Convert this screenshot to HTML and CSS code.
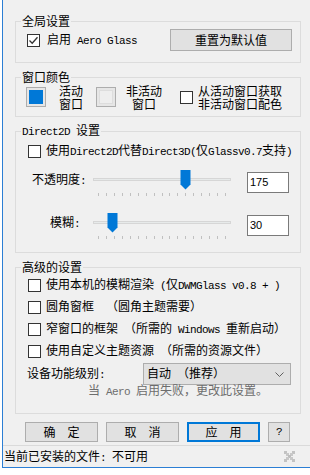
FILE: index.html
```html
<html>
<head>
<meta charset="utf-8">
<link rel="stylesheet" href="styles.css">
</head>
<body>
<div class="window">

<fieldset class="group g1">
<legend>全局设置</legend>
<div class="g1_body">
	<div class="cbrow">
		<span class="cb"><svg width="11" height="11" viewBox="0 0 11 11"><path d="M1.5 5.5 L4.2 8.2 L9.5 2.2" fill="none" stroke="#333" stroke-width="1.3"/></svg></span>
		<span class="cbtext">启用<span class="en"> Aero Glass</span></span>
	</div>
	<button class="btn reset">重置为默认值</button>
</div>
</fieldset>

<fieldset class="group g2">
<legend>窗口颜色</legend>
<div class="colors">
	<span class="swatch"><span class="swatch_fill active"></span></span>
	<span class="swatch_label w_active"><span class="line">活动</span><span class="line">窗口</span></span>
	<span class="swatch"><span class="swatch_fill inactive"></span></span>
	<span class="swatch_label w_inactive"><span class="line">非活动</span><span class="line">窗口</span></span>
	<span class="cb from_active"></span>
	<span class="two_line"><span class="line">从活动窗口获取</span><span class="line">非活动窗口配色</span></span>
</div>
</fieldset>

<fieldset class="group g3">
<legend><span class="en">Direct2D </span>设置</legend>
<div class="g3_body">
	<div class="cbrow">
		<span class="cb"></span>
		<span class="cbtext">使用<span class="en">Direct2D</span>代替<span class="en">Direct3D(</span>仅<span class="en">Glassv0.7</span>支持<span class="en">)</span></span>
	</div>

	<div class="slider_row first">
		<span class="s_label">不透明度<span class="en">:</span></span>
		<div class="track_area">
			<div class="track"></div>
			<div class="ticks"><i></i><i></i><i></i><i></i><i></i><i></i><i></i><i></i><i></i><i></i><i></i><i></i><i></i><i></i><i></i><i></i><i></i></div>
			<svg class="thumb" style="left:87px" width="11" height="20" viewBox="0 0 11 20"><path d="M0.5 0 H10.5 V14.5 L5.5 19.5 L0.5 14.5 Z" fill="#0078d7"/></svg>
		</div>
		<div class="edit">175</div>
	</div>

	<div class="slider_row second">
		<span class="s_label blur">模糊<span class="en">:</span></span>
		<div class="track_area">
			<div class="track"></div>
			<div class="ticks"><i></i><i></i><i></i><i></i><i></i><i></i><i></i><i></i><i></i><i></i><i></i><i></i><i></i><i></i><i></i><i></i><i></i></div>
			<svg class="thumb" style="left:14px" width="11" height="20" viewBox="0 0 11 20"><path d="M0.5 0 H10.5 V14.5 L5.5 19.5 L0.5 14.5 Z" fill="#0078d7"/></svg>
		</div>
		<div class="edit">30</div>
	</div>
</div>
</fieldset>

<fieldset class="group g4">
<legend>高级的设置</legend>
<div class="g4_body">
	<div class="cbrow adv">
		<span class="cb"></span>
		<span class="cbtext">使用本机的模糊渲染<span class="en"> (</span>仅<span class="en">DWMGlass v0.8 + )</span></span>
	</div>
	<div class="cbrow adv">
		<span class="cb"></span>
		<span class="cbtext">圆角窗框<span class="en">  </span>（圆角主题需要）</span>
	</div>
	<div class="cbrow adv">
		<span class="cb"></span>
		<span class="cbtext">窄窗口的框架<span class="en"> </span>（所需的<span class="en"> Windows </span>重新启动）</span>
	</div>
	<div class="cbrow adv">
		<span class="cb"></span>
		<span class="cbtext">使用自定义主题资源<span class="en"> </span>（所需的资源文件）</span>
	</div>
	<div class="combo_row">
		<span>设备功能级别<span class="en">:</span></span>
		<div class="combo">
			<span>自动<span class="en"> </span>（推荐）</span>
			<svg width="9" height="5" viewBox="0 0 9 5"><path d="M0.5 0.5 L4.5 4.5 L8.5 0.5" fill="none" stroke="#606060" stroke-width="1"/></svg>
		</div>
	</div>
	<div class="hint">当<span class="en"> Aero </span>启用失败，更改此设置。</div>
</div>
</fieldset>

<div class="actions">
	<button class="btn">确　定</button>
	<button class="btn">取　消</button>
	<button class="btn default">应　用</button>
	<button class="btn help"><span class="en">?</span></button>
</div>

<div class="status">
	<span>当前已安装的文件<span class="en">: </span>不可用</span>
	<svg class="grip" width="13" height="12" viewBox="0 0 13 12">
		<rect x="1" y="0" width="3" height="3" fill="#c2c2c2"/>
		<rect x="9" y="0" width="3" height="3" fill="#c2c2c2"/>
		<rect x="3" y="2" width="3" height="3" fill="#c8c8c8"/>
		<rect x="7" y="2" width="3" height="3" fill="#c8c8c8"/>
		<rect x="5" y="4" width="3" height="3" fill="#bdbdbd"/>
		<rect x="3" y="6" width="3" height="3" fill="#c8c8c8"/>
		<rect x="7" y="6" width="3" height="3" fill="#c8c8c8"/>
		<rect x="1" y="8" width="3" height="3" fill="#c2c2c2"/>
		<rect x="9" y="8" width="3" height="3" fill="#c2c2c2"/>
	</svg>
</div>

</div>
</body>
</html>
```

FILE: styles.css
```css
* {
	box-sizing: border-box;
}
body {
	margin: 0;
	background-color: #ffffff;
	font-family: "Noto Sans CJK SC", sans-serif;
	font-size: 12px;
	line-height: 14px;
	color: #000000;
}
.en {
	font-family: "Liberation Mono", monospace;
	font-size: 11px;
	letter-spacing: -0.6px;
	white-space: pre;
}
.window {
	margin-left: 2px;
	height: 468px;
	padding-top: 14px;
	background-color: #f0f0f0;
	border-left: 1px solid #2b7ed4;
	border-bottom: 1px solid #2b7ed4;
	display: flex;
	flex-direction: column;
}

/* group boxes */
.group {
	margin: 0 9px 0 12px;
	padding: 0;
	min-width: 0;
	border: 1px solid #dcdcdc;
}
.group legend {
	margin-left: 5px;
	padding: 0 1px;
	line-height: 14px;
}
.g2 {
	margin-top: 7px;
}
.g3 {
	margin-top: 6px;
}
.g4 {
	margin-top: 7px;
}

/* checkboxes */
.cb {
	display: inline-flex;
	align-items: center;
	justify-content: center;
	flex: none;
	width: 13px;
	height: 13px;
	border: 1px solid #333333;
	background-color: #ffffff;
}
.cbrow {
	display: flex;
	align-items: center;
}
.cbtext {
	margin-left: 5px;
	white-space: nowrap;
}

/* global */
.g1_body {
	display: flex;
	align-items: center;
	justify-content: space-between;
	height: 22px;
	margin: 1px 8px 11px 11px;
}
.g1_body .cbtext {
	margin-left: 7px;
}

/* buttons */
.btn {
	margin: 0;
	padding: 0;
	height: 20px;
	width: 73px;
	background-color: #e1e1e1;
	border: 1px solid #adadad;
	font-family: "Noto Sans CJK SC", sans-serif;
	font-size: 12px;
	line-height: 14px;
	color: #000000;
}
.btn.reset {
	width: 122px;
	height: 22px;
}
.btn.default {
	border: 2px solid #0078d7;
}
.btn.help {
	width: 22px;
}

/* window colours */
.colors {
	display: flex;
	align-items: center;
	height: 26px;
	margin: 0 0 6px 10px;
}
.swatch {
	flex: none;
	width: 20px;
	height: 20px;
	padding: 2px;
	border: 1px solid #adadad;
	background-color: #e6e6e6;
}
.swatch_fill {
	display: block;
	width: 14px;
	height: 14px;
}
.swatch_fill.active {
	background-color: #0078d7;
}
.swatch_fill.inactive {
	background-color: #eeeeee;
	border: 1px solid #dddddd;
}
.line {
	display: block;
	height: 13px;
	line-height: 13px;
}
.swatch_label {
	text-align: center;
	margin: 0 10px;
}
.w_active {
	width: 30px;
}
.w_inactive {
	width: 36px;
}
.cb.from_active {
	margin-left: 8px;
}
.two_line {
	margin-left: 5px;
	white-space: nowrap;
}

/* direct2d */
.g3_body {
	padding: 4px 0 11px 0;
}
.g3_body .cbrow,
.g4_body .cbrow {
	height: 16px;
	padding-left: 12px;
}
.slider_row {
	display: flex;
	align-items: flex-start;
	height: 28px;
}
.slider_row.first {
	margin-top: 11px;
}
.slider_row.second {
	margin-top: 15px;
}
.s_label {
	width: 77px;
	margin-top: 2px;
	padding-right: 7px;
	text-align: right;
	white-space: nowrap;
}
.s_label.blur {
	padding-right: 13px;
}
.track_area {
	position: relative;
	width: 138px;
	height: 28px;
}
.track {
	margin-top: 8px;
	height: 3px;
	background-color: #e7eaea;
	border: 1px solid #d6d6d6;
}
.ticks {
	display: flex;
	justify-content: space-between;
	margin: 12px 5px 0 5px;
	height: 3px;
}
.ticks i {
	width: 1px;
	height: 3px;
	background-color: #c0c0c0;
}
.thumb {
	position: absolute;
	top: 0;
}
.edit {
	width: 42px;
	height: 21px;
	margin: 2px 0 0 16px;
	padding-left: 2px;
	border: 1px solid #7a7a7a;
	background-color: #ffffff;
	font-family: "Liberation Sans", sans-serif;
	font-size: 11px;
	line-height: 19px;
}

/* advanced */
.g4_body {
	padding-bottom: 12px;
}
.g4_body .cbrow.adv {
	height: 22px;
}
.combo_row {
	display: flex;
	align-items: center;
	justify-content: space-between;
	height: 22px;
	margin-top: 1px;
	padding: 0 9px 0 11px;
	white-space: nowrap;
}
.combo {
	display: flex;
	align-items: center;
	justify-content: space-between;
	width: 148px;
	height: 22px;
	padding: 0 6px 0 3px;
	border: 1px solid #adadad;
	background-color: #e1e1e1;
}
.hint {
	margin-top: -2px;
	margin-bottom: 2px;
	padding-left: 72px;
	color: #6d6d6d;
	white-space: nowrap;
}

/* bottom */
.actions {
	display: flex;
	gap: 8px;
	margin-top: 8px;
	padding-left: 22px;
}
.status {
	display: flex;
	align-items: center;
	justify-content: space-between;
	margin-top: auto;
	height: 22px;
	padding: 0 14px 0 1px;
	border-top: 1px solid #dadada;
	white-space: nowrap;
}
```
